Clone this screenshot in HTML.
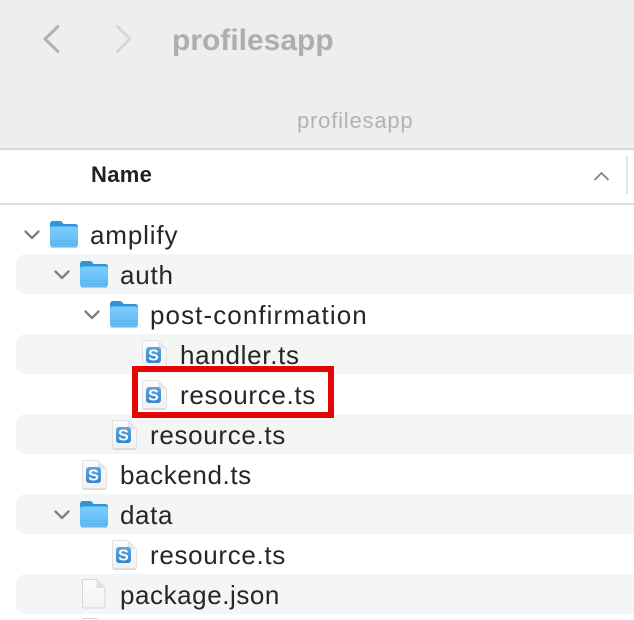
<!DOCTYPE html>
<html><head><meta charset="utf-8">
<style>
html,body{margin:0;padding:0;background:#fff}
#p{position:relative;width:634px;height:620px;overflow:hidden;background:#fff;font-family:"Liberation Sans",sans-serif;color:#262626}
.a{position:absolute}
.hdr{left:0;top:0;width:634px;height:148px;background:#edefef;border-bottom:2px solid #d8d9d9}
.r{position:absolute;left:16px;width:640px;height:40px;background:#f4f5f5;border-radius:10px 0 0 10px}
.t{position:absolute;font-size:26px;line-height:30px;white-space:nowrap;color:#262626;letter-spacing:.7px}
svg{position:absolute;overflow:visible}
</style></head><body>
<div id="p">
<svg width="0" height="0" style="position:absolute">
<defs>
<linearGradient id="fg" x1="0" y1="0" x2="0" y2="1"><stop offset="0" stop-color="#7accfc"/><stop offset="1" stop-color="#60bbf7"/></linearGradient>
<linearGradient id="pg" x1="0" y1="0" x2="0" y2="1"><stop offset="0" stop-color="#fcfcfc"/><stop offset="1" stop-color="#f1f1f1"/></linearGradient>
<linearGradient id="bg" x1="0" y1="0" x2="0" y2="1"><stop offset="0" stop-color="#5aa5e2"/><stop offset="1" stop-color="#3a85c6"/></linearGradient>
<symbol id="folder" viewBox="0 0 28 26" overflow="visible">
<path d="M0 3.500Q0 0 3 0H10Q11.500 0 12.500 1.500L13.500 3H25.500Q28 3 28 6V12H0Z" fill="#2f94da"/>
<path d="M0 8Q0 5.500 2.500 5.500H25.500Q28 5.500 28 8V23Q28 26 25.500 26H2.500Q0 26 0 23Z" fill="url(#fg)"/>
<path d="M0 20H28M0 23H28" stroke="#4ea6e4" stroke-width="1" opacity=".55"/>
<path d="M1 26.300H27" stroke="#9aa5ad" stroke-width="1" opacity=".7"/>
</symbol>
<symbol id="arrow" viewBox="0 0 16 10" overflow="visible">
<path d="M1.500 1.500L8 8L14.500 1.500" fill="none" stroke="#7f7f7f" stroke-width="2.300" stroke-linecap="round" stroke-linejoin="round"/>
</symbol>
<symbol id="sfile" viewBox="0 0 25 30" overflow="visible">
<path d="M.5 1.500Q.5.500 1.500.500H16L24.500 9V27.500Q24.500 28.500 23.500 28.500H1.500Q.5 28.500 .5 27.500Z" fill="url(#pg)" stroke="#e2e2e2"/>
<path d="M1 29.200H24" stroke="#cfcfcf" stroke-width="1"/>
<path d="M16 .5V9H24.500Z" fill="#e8e8e8"/>
<rect x="4" y="7" width="15" height="16" rx="3" fill="url(#bg)"/>
<text x="11.500" y="20.500" text-anchor="middle" font-size="16" font-weight="bold" fill="#fff" font-family="Liberation Sans">S</text>
</symbol>
</defs>
</svg>

<div class="a hdr"></div>
<svg style="left:42px;top:24px" width="20" height="30"><path d="M16 2.500L3 15L16 27.500" fill="none" stroke="#b2b3b3" stroke-width="3" stroke-linecap="round" stroke-linejoin="round"/></svg>
<svg style="left:114px;top:24px" width="20" height="30"><path d="M3.500 2.500L16 15L3.500 27.500" fill="none" stroke="#d6d7d7" stroke-width="3" stroke-linecap="round" stroke-linejoin="round"/></svg>
<div class="a" style="left:172px;top:23px;font-size:30px;line-height:36px;font-weight:bold;color:#adaeae;letter-spacing:0">profilesapp</div>
<div class="a" style="left:297px;top:108px;font-size:22px;line-height:26px;color:#b1b2b2;letter-spacing:.8px">profilesapp</div>

<div class="a" style="left:91px;top:162px;font-size:22px;line-height:26px;font-weight:bold;color:#222;letter-spacing:.3px">Name</div>
<svg style="left:593px;top:170px" width="18" height="12"><path d="M1.500 10L8.500 3L15.500 10" fill="none" stroke="#858585" stroke-width="1.800"/></svg>
<div class="a" style="left:626px;top:156px;width:2px;height:38px;background:#e2e2e2"></div>
<div class="a" style="left:0;top:203px;width:634px;height:2px;background:#e0e0e0"></div>

<div class="r" style="top:254px"></div>
<div class="r" style="top:334px"></div>
<div class="r" style="top:414px"></div>
<div class="r" style="top:494px"></div>
<div class="r" style="top:574px"></div>

<svg style="left:24px;top:230px" width="16" height="10"><use href="#arrow" width="16" height="10"/></svg>
<svg style="left:54px;top:270px" width="16" height="10"><use href="#arrow" width="16" height="10"/></svg>
<svg style="left:84px;top:310px" width="16" height="10"><use href="#arrow" width="16" height="10"/></svg>
<svg style="left:54px;top:510px" width="16" height="10"><use href="#arrow" width="16" height="10"/></svg>

<svg style="left:50px;top:221px" width="28" height="26"><use href="#folder" width="28" height="26"/></svg>
<svg style="left:80px;top:261px" width="28" height="26"><use href="#folder" width="28" height="26"/></svg>
<svg style="left:110px;top:301px" width="28" height="26"><use href="#folder" width="28" height="26"/></svg>
<svg style="left:80px;top:501px" width="28" height="26"><use href="#folder" width="28" height="26"/></svg>

<svg style="left:142px;top:340px" width="25" height="30"><use href="#sfile" width="25" height="30"/></svg>
<svg style="left:142px;top:380px" width="25" height="30"><use href="#sfile" width="25" height="30"/></svg>
<svg style="left:112px;top:420px" width="25" height="30"><use href="#sfile" width="25" height="30"/></svg>
<svg style="left:82px;top:460px" width="25" height="30"><use href="#sfile" width="25" height="30"/></svg>
<svg style="left:112px;top:540px" width="25" height="30"><use href="#sfile" width="25" height="30"/></svg>

<svg style="left:82px;top:579px" width="24" height="30"><path d="M.5 2Q.5.500 2 .500H14.500L23 9V27Q23 29 21 29H2Q.5 29 .5 27Z" fill="url(#pg)" stroke="#d6d6d6"/><path d="M14.500 .5V9H23Z" fill="#e2e2e2"/></svg>
<svg style="left:82px;top:618px" width="24" height="30"><path d="M.5 2Q.5.500 2 .500H14.500L23 9V27Q23 29 21 29H2Q.5 29 .5 27Z" fill="url(#pg)" stroke="#d6d6d6"/></svg>

<div class="t" style="left:90px;top:220px;letter-spacing:.85px">amplify</div>
<div class="t" style="left:120px;top:260px;letter-spacing:.8px">auth</div>
<div class="t" style="left:150px;top:300px;letter-spacing:1.08px">post-confirmation</div>
<div class="t" style="left:180px;top:340px;letter-spacing:.7px">handler.ts</div>
<div class="t" style="left:180px;top:380px;letter-spacing:.67px">resource.ts</div>
<div class="t" style="left:150px;top:420px;letter-spacing:.67px">resource.ts</div>
<div class="t" style="left:120px;top:460px;letter-spacing:.6px">backend.ts</div>
<div class="t" style="left:120px;top:500px;letter-spacing:.6px">data</div>
<div class="t" style="left:150px;top:540px;letter-spacing:.67px">resource.ts</div>
<div class="t" style="left:120px;top:580px;letter-spacing:.56px">package.json</div>

<div class="a" style="left:132px;top:366px;width:190px;height:40px;border:6px solid #e60505;box-shadow:0 0 0 1px rgba(255,255,255,.6)"></div>
</div>
</body></html>
